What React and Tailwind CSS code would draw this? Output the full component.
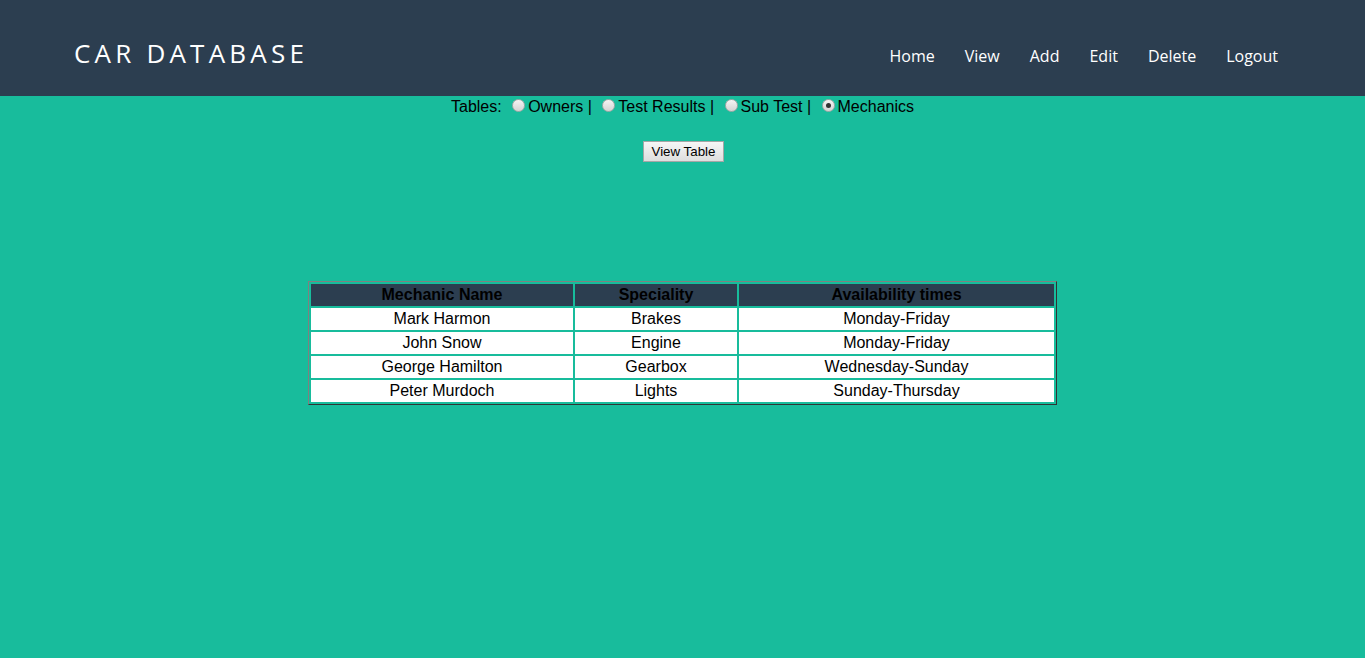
import { useState } from "react";

const tables = ["Owners", "Test Results", "Sub Test", "Mechanics"];

const mechanics = [
  ["Mark Harmon", "Brakes", "Monday-Friday"],
  ["John Snow", "Engine", "Monday-Friday"],
  ["George Hamilton", "Gearbox", "Wednesday-Sunday"],
  ["Peter Murdoch", "Lights", "Sunday-Thursday"],
];

const links = ["Home", "View", "Add", "Edit", "Delete", "Logout"];

function Radio({ checked, onChange }) {
  return (
    <span
      onClick={onChange}
      className="inline-flex items-center justify-center w-[13px] h-[13px] rounded-full border border-[#a9a9a9] bg-gradient-to-b from-[#f4f4f4] to-[#d4d4d4] ml-[6px] mr-[3px] relative top-[-2px] align-middle cursor-pointer"
    >
      {checked && <span className="w-[5px] h-[5px] rounded-full bg-[#333]" />}
    </span>
  );
}

export default function App() {
  const [selected, setSelected] = useState("Mechanics");

  return (
    <div className="min-h-screen bg-[#18bc9c] font-['Liberation_Sans',Arial,sans-serif] text-black">
      {/* Header */}
      <header className="h-[96px] bg-[#2c3e50] flex items-center justify-between pl-[74px] pr-[87px]">
        <h1 className="font-['Open_Sans',sans-serif] text-white text-[26px] tracking-[4.2px] leading-none mt-[10px]">
          CAR DATABASE
        </h1>
        <nav className="flex gap-[30px] font-['Open_Sans',sans-serif] text-white text-[16px] mt-[16px]">
          {links.map((l) => (
            <a key={l} href="#" className="hover:underline">
              {l}
            </a>
          ))}
        </nav>
      </header>

      {/* Table picker */}
      <div className="text-center text-[16px] leading-[20px] pt-[1px]">
        Tables:{" "}
        {tables.map((t, i) => (
          <span key={t}>
            <Radio checked={selected === t} onChange={() => setSelected(t)} />
            {t}
            {i < tables.length - 1 && " | "}
          </span>
        ))}
      </div>

      <div className="text-center mt-[22px]">
        <button className="h-[21px] px-[8px] ml-[2px] text-[13.33px] leading-none border border-[#a6a6a6] bg-gradient-to-b from-[#f6f6f6] to-[#dedede] text-black">
          View Table
        </button>
      </div>

      {/* Results */}
      <table className="mx-auto mt-[118px] w-[749px] border-separate border-spacing-[2px] border border-t-[#808080] border-l-[#808080] border-r-[#333] border-b-[#333] text-[16px] leading-[18px] text-center">
        <thead>
          <tr className="bg-[#2c3e50]">
            <th className="w-[262px] h-[22px] p-0 font-bold">Mechanic Name</th>
            <th className="w-[162px] h-[22px] p-0 font-bold">Speciality</th>
            <th className="h-[22px] p-0 font-bold">Availability times</th>
          </tr>
        </thead>
        <tbody>
          {mechanics.map((row) => (
            <tr key={row[0]} className="bg-white">
              {row.map((c, i) => (
                <td key={i} className="h-[22px] p-0">
                  {c}
                </td>
              ))}
            </tr>
          ))}
        </tbody>
      </table>
    </div>
  );
}
